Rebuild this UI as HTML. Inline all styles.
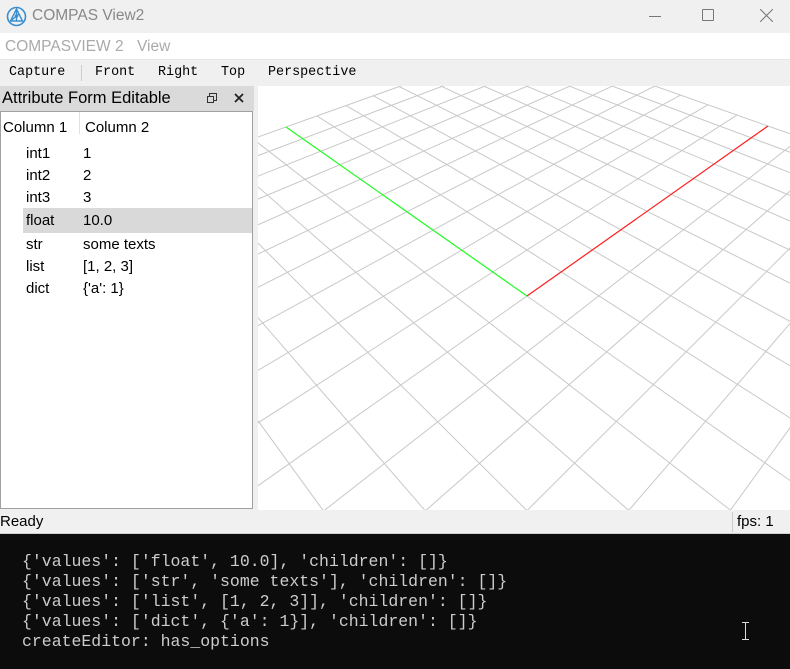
<!DOCTYPE html>
<html><head><meta charset="utf-8"><style>
*{margin:0;padding:0;box-sizing:border-box}
html,body{width:790px;height:669px;overflow:hidden}
body{background:#f0f0f0;font-family:"Liberation Sans","Noto Sans CJK SC",sans-serif;position:relative}
.a{position:absolute;white-space:nowrap}
#title{left:0;top:0;width:790px;height:33px;background:#f0f0f0}
#menu{left:0;top:33px;width:790px;height:27px;background:#fff;border-bottom:1px solid #e6e6e6}
#tool{left:0;top:60px;width:790px;height:26px;background:#f0f0f0;font-family:"Liberation Mono",monospace;font-size:13.4px;color:#000}
#dockt{left:0;top:86px;width:254px;height:25px;background:#dadada}
#table{left:0;top:111px;width:253px;height:398px;background:#fff;border:1px solid #a0a0a0}
#view{left:258px;top:86px;width:532px;height:424px;background:#fff;overflow:hidden}
#status{left:0;top:510px;width:790px;height:24px;background:#f0f0f0;border-bottom:1px solid #d0d0d0}
#con{left:0;top:534px;width:790px;height:135px;background:#0c0c0c;font-family:"Liberation Mono",monospace;font-size:16.5px;color:#cccccc;overflow:hidden}
.t{font-size:15px;color:#000}
svg{display:block}
</style></head><body>
<div class="a" id="title">
 <svg class="a" style="left:6px;top:6px" width="21" height="21" viewBox="0 0 21 21"><circle cx="10.5" cy="10.5" r="9" fill="none" stroke="#3a8fd0" stroke-width="1.6"/><path d="M10.5 3 L4.5 15 H16.5 Z M10.5 3 V15 M4.5 15 L13 8" fill="none" stroke="#3a8fd0" stroke-width="1.4"/><circle cx="10.5" cy="10" r="1.8" fill="#3a8fd0"/></svg>
 <div class="a" style="left:32px;top:7px;font-size:15.5px;color:#888">COMPAS View2</div>
 <div class="a" style="left:649px;top:16px;width:12px;height:1px;background:#777"></div>
 <div class="a" style="left:702px;top:9px;width:12px;height:12px;border:1px solid #777;border-radius:1px"></div>
 <svg class="a" style="left:760px;top:9px" width="13" height="13"><path d="M0 0L13 13M13 0L0 13" stroke="#777" stroke-width="1"/></svg>
</div>
<div class="a" id="menu">
 <div class="a" style="left:5px;top:5px;font-size:15.5px;color:#aaa">COMPASVIEW 2</div>
 <div class="a" style="left:137px;top:5px;font-size:15.5px;color:#aaa">View</div>
</div>
<div class="a" id="tool">
 <div class="a" style="left:9px;top:5px">Capture</div>
 <div class="a" style="left:81px;top:5px;width:1px;height:16px;background:#ccc"></div>
 <div class="a" style="left:95px;top:5px">Front</div>
 <div class="a" style="left:158px;top:5px">Right</div>
 <div class="a" style="left:221px;top:5px">Top</div>
 <div class="a" style="left:268px;top:5px">Perspective</div>
</div>
<div class="a" id="dockt">
 <div class="a t" style="left:2px;top:3px;font-size:16.5px">Attribute Form Editable</div>
 <div class="a" style="left:209px;top:7px;width:8px;height:8px;border:1.5px solid #333"></div>
 <div class="a" style="left:207px;top:10px;width:7px;height:7px;border:1.5px solid #333;background:#dadada"></div>
 <svg class="a" style="left:234px;top:7px" width="10" height="10"><path d="M1 1L9 9M9 1L1 9" stroke="#222" stroke-width="1.8"/></svg>
</div>
<div class="a" id="table">
 <div class="a" style="left:78px;top:0;width:1px;height:22px;background:#e0e0e0"></div>
 <div class="a t" style="left:2px;top:7px">Column 1</div>
 <div class="a t" style="left:84px;top:7px">Column 2</div>
 <div class="a" style="left:22px;top:96px;width:229px;height:25px;background:#d9d9d9"></div>
 <div class="a t" style="left:25px;top:33px">int1</div><div class="a t" style="left:82px;top:33px">1</div>
 <div class="a t" style="left:25px;top:55px">int2</div><div class="a t" style="left:82px;top:55px">2</div>
 <div class="a t" style="left:25px;top:77px">int3</div><div class="a t" style="left:82px;top:77px">3</div>
 <div class="a t" style="left:25px;top:100px">float</div><div class="a t" style="left:82px;top:100px">10.0</div>
 <div class="a t" style="left:25px;top:124px">str</div><div class="a t" style="left:82px;top:124px">some texts</div>
 <div class="a t" style="left:25px;top:146px">list</div><div class="a t" style="left:82px;top:146px">[1, 2, 3]</div>
 <div class="a t" style="left:25px;top:168px">dict</div><div class="a t" style="left:82px;top:168px">{'a': 1}</div>
</div>
<div class="a" id="view"><svg id="g" width="532" height="424" viewBox="258 86 532 424"></svg></div>
<div class="a" id="status">
 <div class="a t" style="left:0;top:3px">Ready</div>
 <div class="a" style="left:732px;top:2px;width:1px;height:20px;background:#ccc"></div>
 <div class="a t" style="left:737px;top:3px">fps: 1</div>
</div>
<div class="a" id="con">
 <div class="a" style="left:22px;top:18px">{'values': ['float', 10.0], 'children': []}</div>
 <div class="a" style="left:22px;top:38px">{'values': ['str', 'some texts'], 'children': []}</div>
 <div class="a" style="left:22px;top:58px">{'values': ['list', [1, 2, 3]], 'children': []}</div>
 <div class="a" style="left:22px;top:78px">{'values': ['dict', {'a': 1}], 'children': []}</div>
 <div class="a" style="left:22px;top:98px">createEditor: has_options</div>
 <div class="a" style="left:745px;top:88px;width:1px;height:18px;background:#ddd"></div>
 <div class="a" style="left:742px;top:88px;width:7px;height:1px;background:#ddd"></div>
 <div class="a" style="left:742px;top:105px;width:7px;height:1px;background:#ddd"></div>
</div>
<script>
(function(){
var src=[[0,0],[10,0],[0,10],[1,1]],dst=[[527,296],[768,126],[286,127],[527,250]];
var A=[],b=[];
for(var i=0;i<4;i++){var x=src[i][0],y=src[i][1],u=dst[i][0],v=dst[i][1];
A.push([x,y,1,0,0,0,-u*x,-u*y]);b.push(u);A.push([0,0,0,x,y,1,-v*x,-v*y]);b.push(v);}
var n=8;for(var c=0;c<n;c++){var p=c;for(var r=c+1;r<n;r++)if(Math.abs(A[r][c])>Math.abs(A[p][c]))p=r;
var t=A[c];A[c]=A[p];A[p]=t;t=b[c];b[c]=b[p];b[p]=t;
for(var r=0;r<n;r++)if(r!=c){var f=A[r][c]/A[c][c];for(var k=c;k<n;k++)A[r][k]-=f*A[c][k];b[r]-=f*b[c];}}
var h=[];for(var i=0;i<n;i++)h.push(b[i]/A[i][i]);
function P(x,y){var w=h[6]*x+h[7]*y+1;return [(h[0]*x+h[1]*y+h[2])/w,(h[3]*x+h[4]*y+h[5])/w,w];}
var N=10,s='';
function seg(x1,y1,x2,y2,col,sw){
 var w1=h[6]*x1+h[7]*y1+1,w2=h[6]*x2+h[7]*y2+1,e=0.02;
 if(w1<e&&w2<e)return;
 if(w1<e){var t=(e-w1)/(w2-w1);x1+=t*(x2-x1);y1+=t*(y2-y1);}
 else if(w2<e){var t=(e-w2)/(w1-w2);x2+=t*(x1-x2);y2+=t*(y1-y2);}
 var a=P(x1,y1),c=P(x2,y2);
 s+='<line x1="'+a[0]+'" y1="'+a[1]+'" x2="'+c[0]+'" y2="'+c[1]+'" stroke="'+col+'" stroke-width="'+sw+'"/>';}
for(var i=-N;i<=N;i++){seg(i,-N,i,N,'#c8c8c8',1);seg(-N,i,N,i,'#c8c8c8',1);}
seg(0,0,10,0,'#ff2020',1.2);seg(0,0,0,10,'#20ff20',1.2);
document.getElementById('g').innerHTML=s;
})();
</script>
</body></html>
